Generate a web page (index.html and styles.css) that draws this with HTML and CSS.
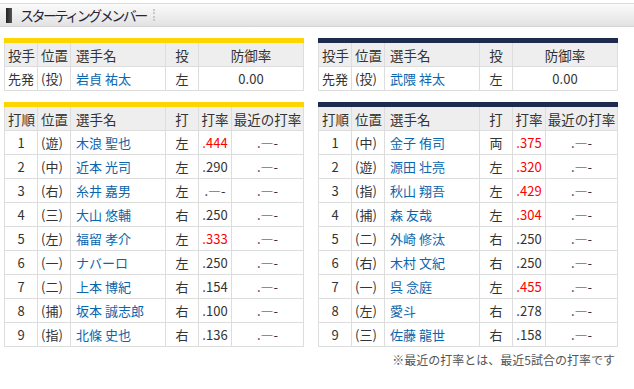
FILE: index.html
```html
<!DOCTYPE html>
<html lang="ja">
<head>
<meta charset="utf-8">
<link rel="stylesheet" href="styles.css">
</head>
<body>
<div class="titlebar">
  <span class="mark"></span>
  <span class="title">スターティングメンバー</span>
  <span class="dots"></span>
</div>
<div class="cols">
  <div class="col">
    <table class="tbl tigers">
      <colgroup><col class="w33"><col class="w33"><col class="w95"><col class="w33"><col></colgroup>
      <tr class="head"><th>投手</th><th>位置</th><th>選手名</th><th class="c">投</th><th class="c">防御率</th></tr>
      <tr><td>先発</td><td>(投)</td><td class="nm">岩貞 祐太</td><td class="c">左</td><td class="c">0.00</td></tr>
    </table>
    <table class="tbl tigers">
      <colgroup><col class="w33"><col class="w33"><col class="w95"><col class="w33"><col class="w33"><col></colgroup>
      <tr class="head"><th>打順</th><th>位置</th><th>選手名</th><th class="c">打</th><th class="c">打率</th><th class="c">最近の打率</th></tr>
      <tr><td class="c">1</td><td>(遊)</td><td class="nm">木浪 聖也</td><td class="c">左</td><td class="c hot">.444</td><td class="c">.―-</td></tr>
      <tr><td class="c">2</td><td>(中)</td><td class="nm">近本 光司</td><td class="c">左</td><td class="c">.290</td><td class="c">.―-</td></tr>
      <tr><td class="c">3</td><td>(右)</td><td class="nm">糸井 嘉男</td><td class="c">左</td><td class="c">.―-</td><td class="c">.―-</td></tr>
      <tr><td class="c">4</td><td>(三)</td><td class="nm">大山 悠輔</td><td class="c">右</td><td class="c">.250</td><td class="c">.―-</td></tr>
      <tr><td class="c">5</td><td>(左)</td><td class="nm">福留 孝介</td><td class="c">左</td><td class="c hot">.333</td><td class="c">.―-</td></tr>
      <tr><td class="c">6</td><td>(一)</td><td class="nm">ナバーロ</td><td class="c">左</td><td class="c">.250</td><td class="c">.―-</td></tr>
      <tr><td class="c">7</td><td>(二)</td><td class="nm">上本 博紀</td><td class="c">右</td><td class="c">.154</td><td class="c">.―-</td></tr>
      <tr><td class="c">8</td><td>(捕)</td><td class="nm">坂本 誠志郎</td><td class="c">右</td><td class="c">.100</td><td class="c">.―-</td></tr>
      <tr><td class="c">9</td><td>(指)</td><td class="nm">北條 史也</td><td class="c">右</td><td class="c">.136</td><td class="c">.―-</td></tr>
    </table>
  </div>
  <div class="col">
    <table class="tbl lions">
      <colgroup><col class="w33"><col class="w33"><col class="w95"><col class="w33"><col></colgroup>
      <tr class="head"><th>投手</th><th>位置</th><th>選手名</th><th class="c">投</th><th class="c">防御率</th></tr>
      <tr><td>先発</td><td>(投)</td><td class="nm">武隈 祥太</td><td class="c">左</td><td class="c">0.00</td></tr>
    </table>
    <table class="tbl lions">
      <colgroup><col class="w33"><col class="w33"><col class="w95"><col class="w33"><col class="w33"><col></colgroup>
      <tr class="head"><th>打順</th><th>位置</th><th>選手名</th><th class="c">打</th><th class="c">打率</th><th class="c">最近の打率</th></tr>
      <tr><td class="c">1</td><td>(中)</td><td class="nm">金子 侑司</td><td class="c">両</td><td class="c hot">.375</td><td class="c">.―-</td></tr>
      <tr><td class="c">2</td><td>(遊)</td><td class="nm">源田 壮亮</td><td class="c">左</td><td class="c hot">.320</td><td class="c">.―-</td></tr>
      <tr><td class="c">3</td><td>(指)</td><td class="nm">秋山 翔吾</td><td class="c">左</td><td class="c hot">.429</td><td class="c">.―-</td></tr>
      <tr><td class="c">4</td><td>(捕)</td><td class="nm">森 友哉</td><td class="c">左</td><td class="c hot">.304</td><td class="c">.―-</td></tr>
      <tr><td class="c">5</td><td>(二)</td><td class="nm">外崎 修汰</td><td class="c">右</td><td class="c">.250</td><td class="c">.―-</td></tr>
      <tr><td class="c">6</td><td>(右)</td><td class="nm">木村 文紀</td><td class="c">右</td><td class="c">.250</td><td class="c">.―-</td></tr>
      <tr><td class="c">7</td><td>(一)</td><td class="nm">呉 念庭</td><td class="c">左</td><td class="c hot">.455</td><td class="c">.―-</td></tr>
      <tr><td class="c">8</td><td>(左)</td><td class="nm">愛斗</td><td class="c">右</td><td class="c">.278</td><td class="c">.―-</td></tr>
      <tr><td class="c">9</td><td>(三)</td><td class="nm">佐藤 龍世</td><td class="c">右</td><td class="c">.158</td><td class="c">.―-</td></tr>
    </table>
    <p class="note">※最近の打率とは、最近5試合の打率です</p>
  </div>
</div>
</body>
</html>
```
FILE: styles.css
```css
html, body {
  margin: 0;
  padding: 0;
  background: #fff;
}
body {
  font-family: "Noto Sans CJK JP", "Liberation Sans", sans-serif;
  color: #333;
  font-size: 13px;
}
.titlebar {
  margin-top: 3px;
  height: 22px;
  border-top: 1px solid #dcdcdc;
  border-bottom: 1px solid #d4d4d4;
  background: linear-gradient(#fbfbfb, #ececec 60%, #e2e2e2);
  display: flex;
  align-items: center;
  padding-left: 6px;
}
.mark {
  width: 6px;
  height: 15px;
  background: linear-gradient(90deg, #222, #555);
  margin-right: 8px;
}
.title {
  font-size: 14px;
  color: #2a2438;
  letter-spacing: -2.5px;
  line-height: 22px;
}
.dots {
  width: 0;
  height: 12px;
  border-left: 2px dotted #c8c8c8;
  margin-left: 7px;
}
.cols {
  display: flex;
  gap: 15px;
  padding: 11px 0 0 4px;
}
.col {
  width: 299px;
  display: flex;
  flex-direction: column;
  gap: 11px;
}
.tbl {
  width: 300px;
  border-collapse: collapse;
  table-layout: fixed;
}
.tbl.tigers { border-top: 5px solid #fdd600; }
.tbl.lions { border-top: 5px solid #1f2b4d; }
.w33 { width: 33px; }
.w95 { width: 95px; }
.tbl th, .tbl td {
  border: 1px solid #dddddd;
  height: 23px;
  padding: 0 3px;
  text-align: left;
  font-weight: normal;
  white-space: nowrap;
  overflow: hidden;
  line-height: 22px;
}
.tbl th {
  background: #eeeeee;
  font-size: 13.5px;
}
.tbl th.c, .tbl td.c { text-align: center; padding: 0; }
.tbl td.nm {
  color: #0a66ad;
  padding-left: 5px;
}
.tbl th:nth-child(3) { padding-left: 5px; }
.tbl td.hot { color: #ff0000; }
.tbl td {
  background: #fff;
}
.note {
  margin: -7px 0 0 0;
  text-align: right;
  font-size: 12px;
  color: #555;
  padding-right: 2px;
  line-height: 18px;
}
```
